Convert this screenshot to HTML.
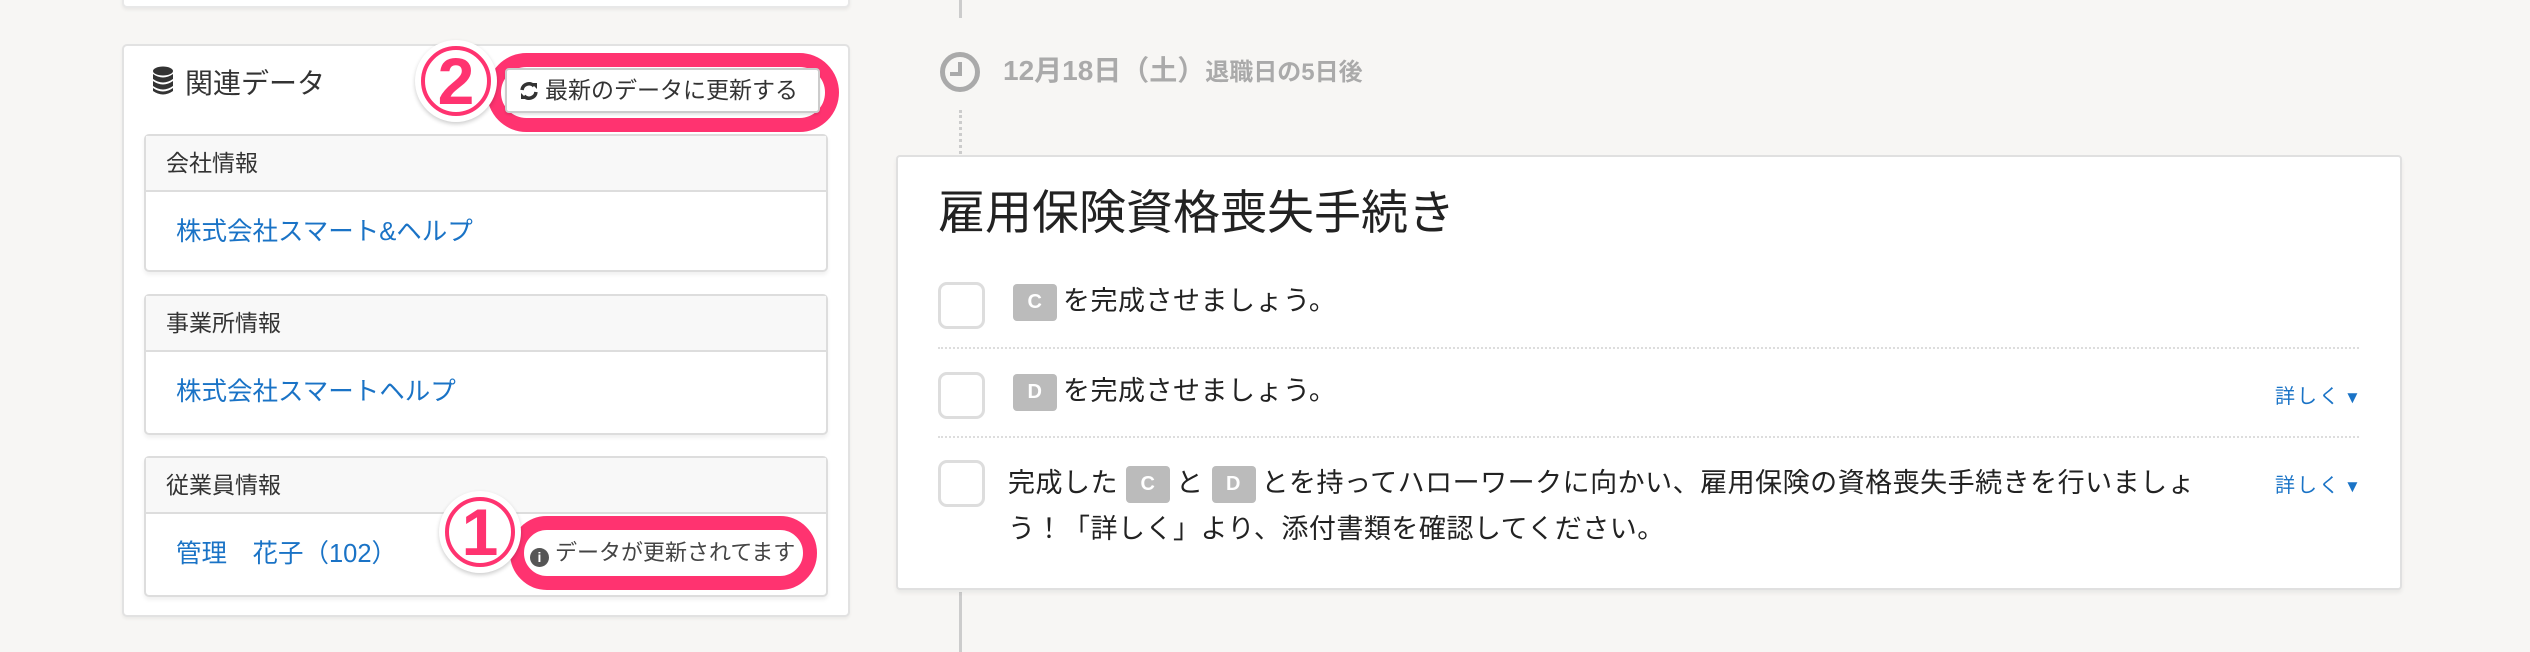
<!DOCTYPE html>
<html><head><meta charset="utf-8"><style>
*{box-sizing:border-box;margin:0;padding:0}
body{width:2530px;height:648px;background:#f7f6f4;position:relative;overflow:hidden;font-family:"Liberation Sans","Noto Sans CJK JP",sans-serif;color:#333}
.abs{position:absolute}
.panel{left:122px;top:44px;width:728px;height:573px;background:#fff;border:2px solid #e2e2e2;border-radius:5px;box-shadow:0 2px 3px rgba(0,0,0,.05)}
.top{left:122px;top:-20px;width:728px;height:28px;background:#fff;border:2px solid #e8e8e8;border-radius:5px;box-shadow:0 2px 3px rgba(0,0,0,.06)}
.card{left:144px;width:684px;background:#fff;border:2px solid #ddd;border-radius:5px;box-shadow:0 3px 4px rgba(0,0,0,.06)}
.card .h{height:56px;background:#f8f8f8;border-bottom:2px solid #ddd;font-size:23px;line-height:54px;padding-left:20px;color:#333}
.card .b{font-size:25.5px;color:#1a73c6;padding-left:30px;line-height:80px}
.pill{border:14px solid #ff3370;border-radius:40px;background:#fff}
.num{width:82px;height:82px;border-radius:50%;background:#fff;box-shadow:0 2px 4px rgba(0,0,0,.2);display:flex;align-items:center;justify-content:center}
.num div{width:70px;height:70px;border-radius:50%;border:4px solid #ff3370;color:#ff3370;font-weight:bold;font-size:66px;line-height:62px;text-align:center}
.rc{left:896px;top:155px;width:1506px;height:435px;background:#fff;border:2px solid #e0e0e0;border-radius:4px;box-shadow:0 3px 4px rgba(0,0,0,.06)}
.cb{width:47px;height:47px;border:3px solid #ddd;border-radius:9px;background:#fff}
.bd{display:inline-block;width:44px;height:37px;background:#bbb;border-radius:4px;color:#fff;font-weight:bold;font-size:20px;text-align:center;line-height:37px;vertical-align:middle;margin-right:6px}
.t{font-size:27px;color:#222;letter-spacing:0.5px}
.more{font-size:20px;color:#1a73c6;letter-spacing:2px}
.sep{left:938px;width:1421px;border-top:2px dotted #ddd}
</style></head><body>
<div class="abs top"></div>
<div class="abs panel"></div>
<div class="abs" style="left:152px;top:66px;width:22px;height:30px">
<svg width="22" height="30" viewBox="0 0 22 30"><ellipse cx="11" cy="5" rx="10" ry="4.5" fill="#333"/><path d="M1 8q10 7 20 0v5q-10 7-20 0z" fill="#333"/><path d="M1 15q10 7 20 0v5q-10 7-20 0z" fill="#333"/><path d="M1 22q10 7 20 0v3q-10 7-20 0z" fill="#333"/></svg></div>
<div class="abs" style="left:185px;top:62px;font-size:28px;color:#333">関連データ</div>
<div class="abs pill" style="left:487px;top:53px;width:352px;height:79px"></div>
<div class="abs" style="left:505px;top:68px;width:315px;height:45px;background:#fff;border:2px solid #ccc;border-radius:4px;box-shadow:0 2px 2px rgba(0,0,0,.1);font-size:23px;line-height:41px;padding-left:38px;color:#333;white-space:nowrap">最新のデータに更新する
<svg class="abs" style="left:12px;top:11px" width="20" height="20" viewBox="0 0 20 20"><path d="M3 9a7 7 0 0 1 12-4" stroke="#333" stroke-width="3.5" fill="none"/><path d="M12 2h6v6z" fill="#333"/><path d="M17 11a7 7 0 0 1-12 4" stroke="#333" stroke-width="3.5" fill="none"/><path d="M8 18H2v-6z" fill="#333"/></svg></div>
<div class="abs num" style="left:415px;top:40px"><div>2</div></div>

<div class="abs card" style="top:134px;height:138px"><div class="h">会社情報</div><div class="b">株式会社スマート&amp;ヘルプ</div></div>
<div class="abs card" style="top:294px;height:141px"><div class="h">事業所情報</div><div class="b">株式会社スマートヘルプ</div></div>
<div class="abs card" style="top:456px;height:141px"><div class="h">従業員情報</div><div class="b">管理　花子（102）</div></div>
<div class="abs pill" style="left:510px;top:516px;width:307px;height:74px"></div>
<div class="abs" style="left:530px;top:536px;font-size:22px;color:#444;line-height:34px;white-space:nowrap"><span style="display:inline-block;width:19px;height:19px;border-radius:50%;background:#555;color:#fff;font-size:14px;font-weight:bold;text-align:center;line-height:19px;vertical-align:-2px;margin-right:6px">i</span>データが更新されてます</div>
<div class="abs num" style="left:439px;top:491px"><div>1</div></div>

<div class="abs" style="left:959px;top:0;width:3px;height:18px;background:#ccc"></div>
<div class="abs" style="left:940px;top:52px;width:40px;height:40px;border:5px solid #aaa;border-radius:50%"></div>
<div class="abs" style="left:958px;top:62px;width:4px;height:13px;background:#aaa"></div>
<div class="abs" style="left:950px;top:72px;width:12px;height:4px;background:#aaa"></div>
<div class="abs" style="left:1003px;top:54px;font-size:28px;font-weight:bold;color:#aaa;line-height:34px;white-space:nowrap">12月18日（土）<span style="font-size:24px">退職日の5日後</span></div>
<div class="abs" style="left:959px;top:110px;height:44px;border-left:3px dotted #ccc"></div>
<div class="abs" style="left:959px;top:592px;width:3px;height:60px;background:#ccc"></div>

<div class="abs rc"></div>
<div class="abs" style="left:938px;top:182px;font-size:47px;color:#222;line-height:62px;white-space:nowrap">雇用保険資格喪失手続き</div>
<div class="abs cb" style="left:938px;top:282px"></div>
<div class="abs t" style="left:1013px;top:283px;line-height:37px"><span class="bd">C</span>を完成させましょう。</div>
<div class="abs sep" style="top:347px"></div>
<div class="abs cb" style="left:938px;top:372px"></div>
<div class="abs t" style="left:1013px;top:373px;line-height:37px"><span class="bd">D</span>を完成させましょう。</div>
<div class="abs more" style="left:2275px;top:380px">詳しく<span style="font-size:17px;margin-left:3px">▼</span></div>
<div class="abs sep" style="top:436px"></div>
<div class="abs cb" style="left:938px;top:460px"></div>
<div class="abs t" style="left:1008px;top:460px;width:1215px;line-height:46px">完成した <span class="bd">C</span>と <span class="bd">D</span>とを持ってハローワークに向かい、雇用保険の資格喪失手続きを行いましょう！「詳しく」より、添付書類を確認してください。</div>
<div class="abs more" style="left:2275px;top:469px">詳しく<span style="font-size:17px;margin-left:3px">▼</span></div>
</body></html>
